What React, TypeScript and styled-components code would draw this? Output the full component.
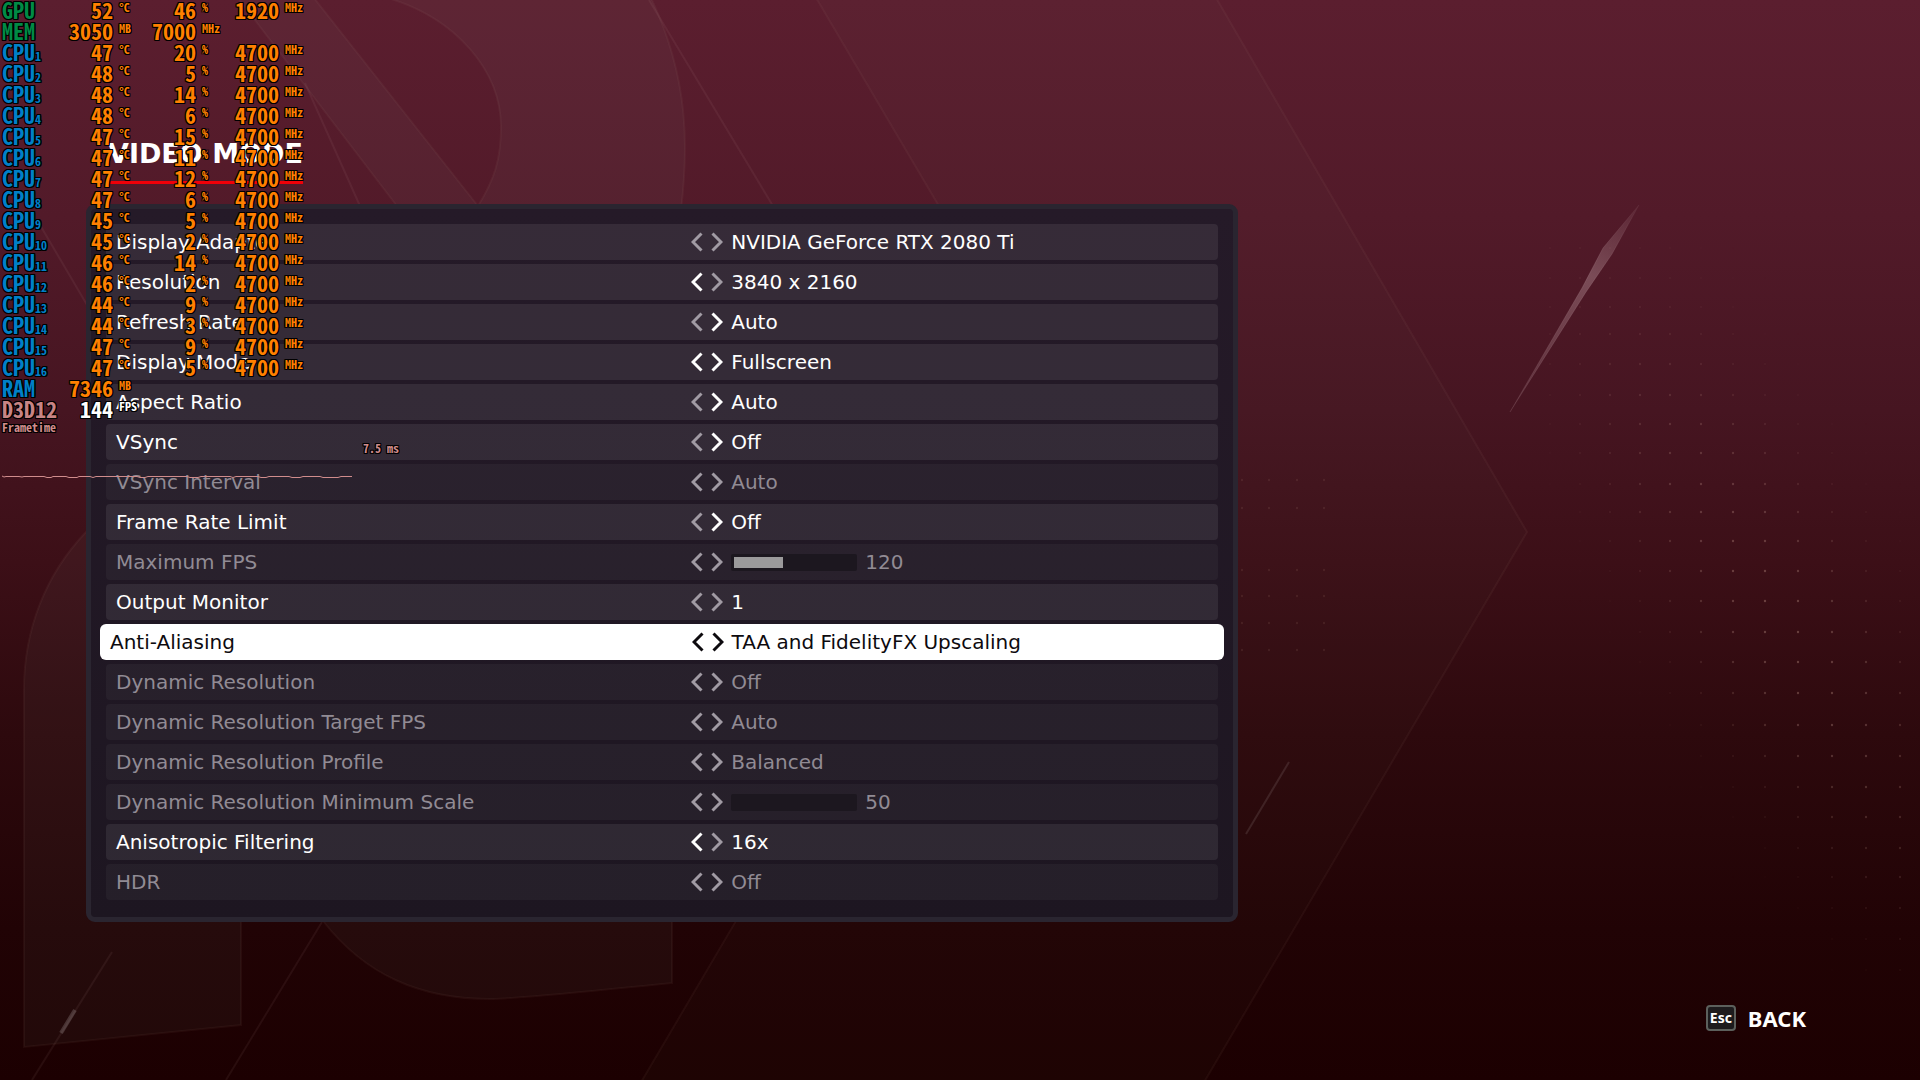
import React from "react";
import styled, { createGlobalStyle } from "styled-components";

const Global = createGlobalStyle`
  *, *::before, *::after { box-sizing: border-box; }
  body {
    margin: 0;
    background: #1c0001;
    color: #fff;
    font-family: "DejaVu Sans", sans-serif;
  }
`;

/* ---------- page ---------- */

const Page = styled.div`
  position: relative;
  display: flex;
  flex-direction: column;
  min-height: 100vh;
  overflow: hidden;
  background: linear-gradient(
    #5b1e2f 0%,
    #521a29 20%,
    #461521 38%,
    #3c0f17 52%,
    #2d090d 68%,
    #210305 86%,
    #1c0001 100%
  );
`;

const Art = styled.svg`
  position: absolute;
  inset: 0;
  width: 100%;
  height: 100%;
  pointer-events: none;
`;

const Main = styled.main`
  position: relative;
  display: flex;
  flex-direction: column;
  align-items: flex-start;
  padding: 138px 86px 0;
`;

const Title = styled.h1`
  margin: 0 0 20px 22px;
  padding-bottom: 11px;
  border-bottom: 3px solid #f00008;
  font-size: 27px;
  line-height: 32px;
  font-weight: 700;
`;

const Panel = styled.section`
  display: flex;
  flex-direction: column;
  gap: 4px;
  width: 60vw;
  min-width: 860px;
  padding: 15px 15px 17px;
  border: 5px solid #2a2530;
  border-radius: 9px;
  background: linear-gradient(#251a28, #1d1621);
`;

type Tone = "normal" | "dim" | "selected";

const rowFill = {
  normal: "rgba(255, 255, 255, 0.08)",
  dim: "rgba(255, 255, 255, 0.04)",
  selected: "#fff",
};
const rowText = { normal: "#fff", dim: "#918b94", selected: "#0d0a0e" };

const Row = styled.div<{ $tone: Tone }>`
  display: grid;
  grid-template-columns: minmax(0, 10fr) minmax(0, 9fr);
  align-items: center;
  height: 36px;
  margin: 0 ${(p) => (p.$tone === "selected" ? "-6px" : "0")};
  border-radius: ${(p) => (p.$tone === "selected" ? "6px" : "4px")};
  background: ${(p) => rowFill[p.$tone]};
  color: ${(p) => rowText[p.$tone]};
  font-size: 20px;
  line-height: 24px;
  white-space: nowrap;
`;

const Name = styled.label`
  padding-left: 10px;
`;

const Control = styled.div`
  display: flex;
  align-items: center;
`;

const Arrow = styled.button<{ $color: string }>`
  display: flex;
  width: 12px;
  height: 20px;
  margin-right: 8px;
  padding: 0;
  border: 0;
  background: none;
  color: ${(p) => p.$color};
  cursor: pointer;

  &:disabled {
    cursor: default;
  }
`;

const Value = styled.output``;

const Range = styled.input<{ $fill: number }>`
  appearance: none;
  width: 126px;
  height: 17px;
  margin: 0 8px 0 0;
  padding: 3px;
  border-radius: 2px;
  background: #1c171f;

  &::-webkit-slider-runnable-track {
    height: 11px;
    background: linear-gradient(
      to right,
      #9b9a9b ${(p) => p.$fill}%,
      transparent ${(p) => p.$fill}%
    );
  }
  &::-webkit-slider-thumb {
    appearance: none;
    width: 0;
    height: 11px;
  }
`;

const Footer = styled.footer`
  position: relative;
  display: flex;
  justify-content: flex-end;
  margin-top: auto;
  padding: 0 114px 47px;
`;

const BackButton = styled.button`
  display: flex;
  align-items: center;
  gap: 12px;
  padding: 0;
  border: 0;
  background: none;
  color: #fff;
  font: 700 22px/30px "Noto Sans", sans-serif;
  cursor: pointer;
`;

const Key = styled.kbd`
  width: 30px;
  height: 26px;
  border: 2px solid #5c605c;
  border-radius: 4px;
  background: #1d1b1d;
  font: 700 14px/22px "Noto Sans", sans-serif;
  text-align: center;
`;

/* ---------- hardware monitor overlay ---------- */

const Monitor = styled.aside`
  position: absolute;
  top: 0;
  left: 2px;
  font-family: "Noto Sans Mono CJK SC", "Liberation Mono", monospace;
  font-weight: 700;
  font-size: 12px;
  line-height: 14px;
  color: #d08c8c;
  text-shadow: 1px 0 #000, -1px 0 #000, 0 1px #000, 0 -1px #000, 1px 1px #000,
    -1px -1px #000, 1px -1px #000, -1px 1px #000;
`;

const Readings = styled.table`
  width: 316px;
  table-layout: fixed;
  border-collapse: collapse;
  font-size: 22px;
  line-height: 19px;

  tr {
    height: 21px;
  }
  th,
  td {
    height: 21px;
    padding: 0;
    text-align: left;
    vertical-align: top;
    font-weight: 700;
  }
  th {
    width: 67px;
  }
`;

const Source = styled.th<{ $color: string }>`
  color: ${(p) => p.$color};
  white-space: nowrap;

  sub {
    font-size: 12px;
    line-height: 12px;
    vertical-align: baseline;
  }
`;

const Reading = styled.div<{ $color: string }>`
  display: flex;
  gap: 6px;
  height: 21px;
  color: ${(p) => p.$color};
`;

const Amount = styled.span`
  width: 44px;
  text-align: right;
`;

const Unit = styled.span`
  font-size: 12px;
  line-height: 14px;
`;

const Frametime = styled.div`
  width: 400px;
`;

const Latest = styled.div`
  padding: 7px 0 0 361px;
`;

const Trace = styled.svg`
  display: block;
  width: 350px;
  height: 8px;
  margin-top: 17px;
`;

/* ---------- data ---------- */

interface Setting {
  name: string;
  value: string;
  tone?: Tone;
  prev?: boolean;
  next?: boolean;
  range?: { min: number; max: number };
}

const settings: Setting[] = [
  { name: "Display Adapter", value: "NVIDIA GeForce RTX 2080 Ti" },
  { name: "Resolution", value: "3840 x 2160", prev: true },
  { name: "Refresh Rate", value: "Auto", next: true },
  { name: "Display Mode", value: "Fullscreen", prev: true, next: true },
  { name: "Aspect Ratio", value: "Auto", next: true },
  { name: "VSync", value: "Off", next: true },
  { name: "VSync Interval", value: "Auto", tone: "dim" },
  { name: "Frame Rate Limit", value: "Off", next: true },
  { name: "Maximum FPS", value: "120", tone: "dim", range: { min: 30, max: 250 } },
  { name: "Output Monitor", value: "1" },
  {
    name: "Anti-Aliasing",
    value: "TAA and FidelityFX Upscaling",
    tone: "selected",
    prev: true,
    next: true,
  },
  { name: "Dynamic Resolution", value: "Off", tone: "dim" },
  { name: "Dynamic Resolution Target FPS", value: "Auto", tone: "dim" },
  { name: "Dynamic Resolution Profile", value: "Balanced", tone: "dim" },
  {
    name: "Dynamic Resolution Minimum Scale",
    value: "50",
    tone: "dim",
    range: { min: 50, max: 100 },
  },
  { name: "Anisotropic Filtering", value: "16x", prev: true },
  { name: "HDR", value: "Off", tone: "dim" },
];

const GREEN = "#008a45";
const BLUE = "#0080c8";
const ORANGE = "#ff8000";
const PINK = "#c88484";

interface Sensor {
  label: string;
  index?: number;
  color: string;
  valueColor?: string;
  readings: [string, string][];
}

const cores: [number, number][] = [
  [47, 20], [48, 5], [48, 14], [48, 6], [47, 15], [47, 11], [47, 12], [47, 6],
  [45, 5], [45, 2], [46, 14], [46, 2], [44, 9], [44, 3], [47, 9], [47, 5],
];

const sensors: Sensor[] = [
  { label: "GPU", color: GREEN, readings: [["52", "°C"], ["46", "%"], ["1920", "MHz"]] },
  { label: "MEM", color: GREEN, readings: [["3050", "MB"], ["7000", "MHz"]] },
  ...cores.map(
    ([temp, load], i): Sensor => ({
      label: "CPU",
      index: i + 1,
      color: BLUE,
      readings: [[`${temp}`, "°C"], [`${load}`, "%"], ["4700", "MHz"]],
    })
  ),
  { label: "RAM", color: BLUE, readings: [["7346", "MB"]] },
  { label: "D3D12", color: PINK, valueColor: "#fff", readings: [["144", "FPS"]] },
];

/* ---------- drawings ---------- */

const dotColumns = [1550, 1580, 1610, 1640, 1670, 1701, 1733, 1765, 1798, 1832, 1866, 1900];
const dotRows = [
  248, 278, 307, 334, 364, 395, 424, 453, 484, 512, 541, 571, 601, 632, 662, 693,
  725, 756, 787, 817, 848, 877, 908, 939, 970,
];

function dotOpacity(x: number, y: number) {
  const off = (360 * (x - 1680) - 200 * (y - 440)) / 412;
  const along = (200 * (x - 1680) + 360 * (y - 440)) / 412;
  const spread = Math.exp(-((off / 90) ** 2));
  const reach = Math.exp(-(((along - 210) / 300) ** 2));
  return 0.32 * spread * reach;
}

function Backdrop() {
  return (
    <Art viewBox="0 0 1920 1080" preserveAspectRatio="xMidYMid slice" aria-hidden="true">
      <defs>
        <linearGradient id="streak" x1="1639" y1="205" x2="1510" y2="412" gradientUnits="userSpaceOnUse">
          <stop offset="0" stopColor="#b08a92" stopOpacity="0.1" />
          <stop offset="0.35" stopColor="#b08a92" stopOpacity="0.45" />
          <stop offset="1" stopColor="#b08a92" stopOpacity="0.2" />
        </linearGradient>
      </defs>
      <g fill="#9fd0b0" fillOpacity="0.045" stroke="#d0a8a0" strokeOpacity="0.06" strokeWidth="2">
        <path d="M815 -4 L1048 391 L640 1084 H1203 L1527 532 L1215 -4 Z" fillOpacity="0.02" />
        <path d="M388 -2 C455 18 501 70 501 127 C501 160 494 180 478 206 L314 -2 H238 L400 210 H681 C688 150 690 80 651 -2 Z" />
        <path d="M24 1047 V690 C24 630 45 575 86 532 L241 700 V1025 Z" />
        <path d="M323 921 C365 975 420 999 490 999 Q515 999 672 983 V700 H323 Z" />
      </g>
      <g stroke="#d0a8a0" strokeOpacity="0.08" strokeWidth="2" fill="none">
        <path d="M649 0 L773 206" />
        <path d="M305 83 L360 206" />
        <path d="M40 225 L90 310" />
        <path d="M322 922 L226 1080" />
        <path d="M112 952 L32 1080" />
      </g>
      <path
        d="M1639 205 L1612 254 L1586 292 L1510 412 L1582 288 L1603 248 Z"
        fill="url(#streak)"
        stroke="url(#streak)"
        strokeWidth="0.6"
      />
      <path d="M1289 762 L1246 834" stroke="#fff" strokeOpacity="0.1" strokeWidth="2" />
      <path d="M75 1010 L61 1033" stroke="#fff" strokeOpacity="0.17" strokeWidth="4" />
      <g fill="#d8b0a0">
        {dotRows.map((y) =>
          dotColumns.map((x) => (
            <circle key={`${x}-${y}`} cx={x} cy={y} r="1.2" opacity={dotOpacity(x, y)} />
          ))
        )}
        {[480, 508, 570, 596, 623, 650].map((y) =>
          [1242, 1269, 1297, 1324].map((x) => (
            <circle key={`${x}-${y}`} cx={x} cy={y} r="1.2" opacity="0.1" />
          ))
        )}
      </g>
    </Art>
  );
}

function Chevron({ left }: { left?: boolean }) {
  return (
    <svg width="12" height="20" viewBox="0 0 12 20" fill="none" aria-hidden="true">
      <path
        d={left ? "M10.5 1.5 L2 10 L10.5 18.5" : "M1.5 1.5 L10 10 L1.5 18.5"}
        stroke="currentColor"
        strokeWidth="3"
      />
    </svg>
  );
}

/* ---------- parts ---------- */

function SettingRow({ name, value, tone = "normal", prev, next, range }: Setting) {
  const id = name.toLowerCase().replace(/\W+/g, "-");
  const lit = tone === "selected" ? "#0d0a0e" : "#fff";
  const faded = "#a19ba4";
  return (
    <Row $tone={tone}>
      <Name htmlFor={id}>{name}</Name>
      <Control>
        <Arrow $color={prev ? lit : faded} disabled={!prev} aria-label={`Previous ${name}`}>
          <Chevron left />
        </Arrow>
        <Arrow $color={next ? lit : faded} disabled={!next} aria-label={`Next ${name}`}>
          <Chevron />
        </Arrow>
        {range ? (
          <>
            <Range
              id={id}
              type="range"
              min={range.min}
              max={range.max}
              defaultValue={value}
              disabled
              $fill={Math.round(((Number(value) - range.min) / (range.max - range.min)) * 100)}
            />
            <Value htmlFor={id}>{value}</Value>
          </>
        ) : (
          <Value id={id}>{value}</Value>
        )}
      </Control>
    </Row>
  );
}

function HardwareMonitor() {
  return (
    <Monitor>
      <Readings>
        <tbody>
          {sensors.map((s) => (
            <tr key={s.label + (s.index ?? "")}>
              <Source scope="row" $color={s.color}>
                {s.label}
                {s.index && <sub>{s.index}</sub>}
              </Source>
              {[0, 1, 2].map((i) => (
                <td key={i}>
                  {s.readings[i] && (
                    <Reading $color={s.valueColor ?? ORANGE}>
                      <Amount>{s.readings[i][0]}</Amount>
                      <Unit>{s.readings[i][1]}</Unit>
                    </Reading>
                  )}
                </td>
              ))}
            </tr>
          ))}
        </tbody>
      </Readings>
      <Frametime>
        Frametime
        <Latest>7.5 ms</Latest>
        <Trace viewBox="0 0 350 8" aria-hidden="true">
          <path
            d="M0 4 L2 5 L4 4.5 H17 L20 5 L22 4.5 H42 L45 5.5 H49 L51 4.5 H64 L67 5.5 H75 L77 4.5 H88 L91 5.5 L94 4.5 H135 L138 5.5 H143 L146 4.5 H185 L188 5.5 H196 L199 4.5 H228 L231 5.5 L234 4.5 H256 L259 5.5 H264 L267 4.5 H287 L290 5.5 H298 L301 4.5 H318 L321 5.5 H336 L339 4.5 H350"
            stroke="#d08c8c"
            fill="none"
          />
        </Trace>
      </Frametime>
    </Monitor>
  );
}

export default function App() {
  return (
    <>
      <Global />
      <Page>
        <Backdrop />
        <Main>
          <Title>VIDEO MODE</Title>
          <Panel aria-label="Video mode settings">
            {settings.map((s) => (
              <SettingRow key={s.name} {...s} />
            ))}
          </Panel>
        </Main>
        <Footer>
          <BackButton>
            <Key>Esc</Key>
            BACK
          </BackButton>
        </Footer>
        <HardwareMonitor />
      </Page>
    </>
  );
}
